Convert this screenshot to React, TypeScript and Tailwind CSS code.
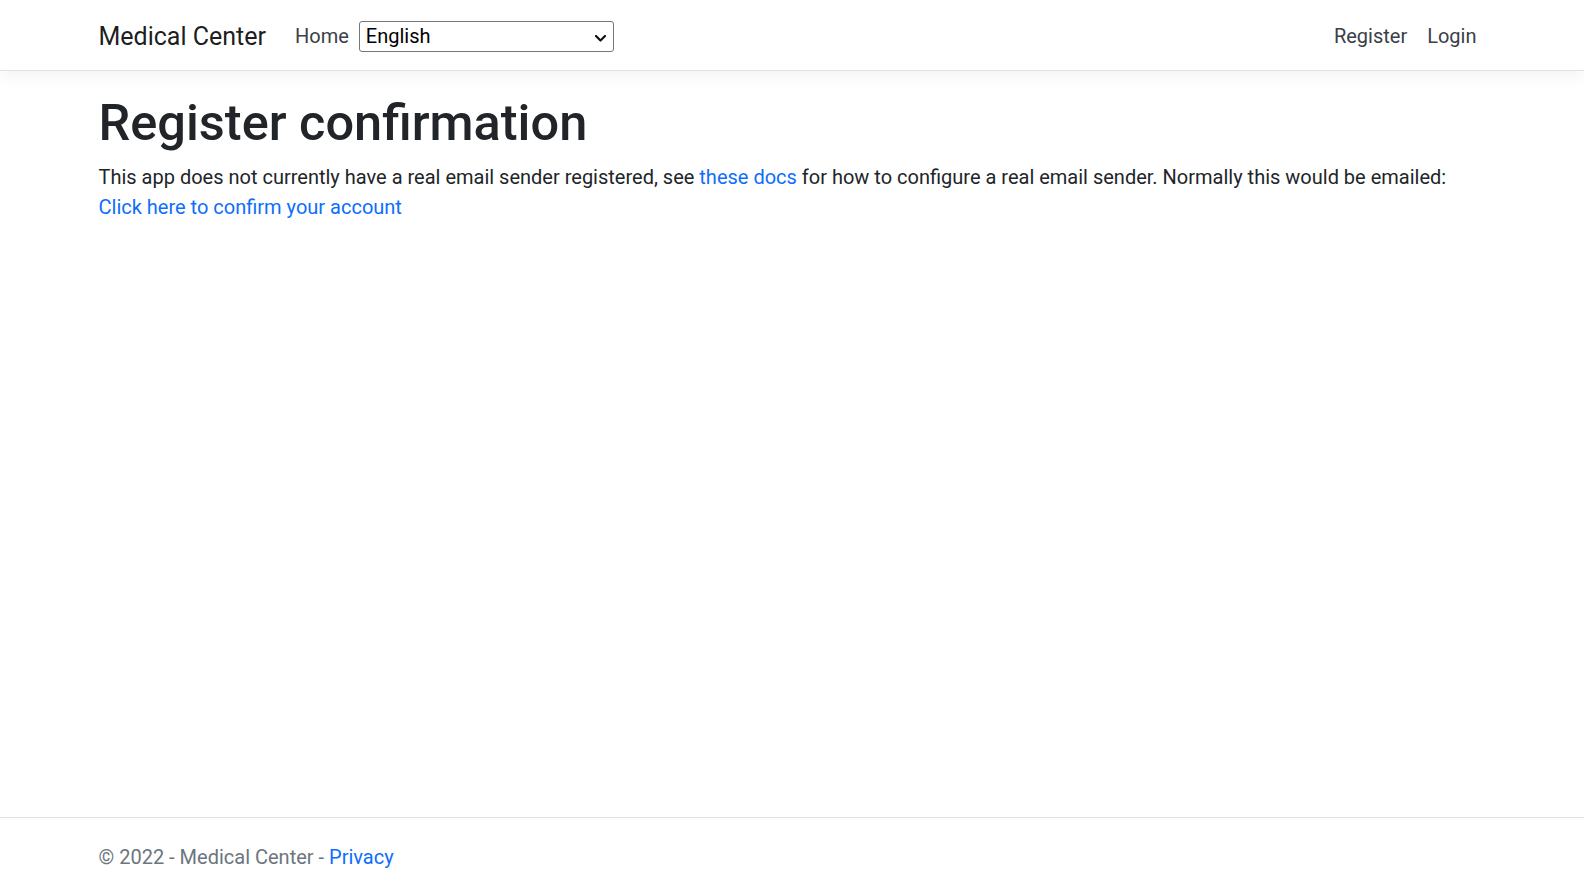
import React from "react";

export default function App() {
  return (
    <div className="min-h-screen flex flex-col bg-white text-[#212529] font-['Roboto',sans-serif] text-[20px] leading-[30px]">
      <header className="relative z-10 h-[71px] border-b border-[#dee2e6] bg-white shadow-[0_5px_15px_rgba(0,0,0,0.05)]">
        <nav className="mx-auto w-[1425px] h-[70px] pt-[2px] px-[15px] flex items-center">
          <a href="#" className="ml-[4px] mr-[19px] text-[25px] leading-[37px] text-[rgba(0,0,0,0.9)] whitespace-nowrap">
            Medical Center
          </a>
          <ul className="flex items-center">
            <li>
              <a href="#" className="block px-[10px] py-[10px] text-[#3a4047]">Home</a>
            </li>
            <li className="relative">
              <select
                defaultValue="en"
                className="appearance-none block w-[255px] h-[31px] pl-[6px] pr-[24px] border border-[#767676] rounded-[3px] bg-white text-[20px] leading-[29px] text-black font-['Roboto',sans-serif] outline-none"
              >
                <option value="en">English</option>
                <option value="es">Español</option>
              </select>
              <svg
                className="pointer-events-none absolute right-[8px] top-[14px]"
                width="11"
                height="7"
                viewBox="0 0 11 7"
                fill="none"
              >
                <path d="M1 1L5.5 5.5L10 1" stroke="#111" strokeWidth="2.2" strokeLinecap="round" strokeLinejoin="round" />
              </svg>
            </li>
          </ul>
          <ul className="ml-auto mr-[3px] flex items-center">
            <li>
              <a href="#" className="block px-[10px] py-[10px] text-[#3a4047]">Register</a>
            </li>
            <li>
              <a href="#" className="block px-[10px] py-[10px] text-[#3a4047]">Login</a>
            </li>
          </ul>
        </nav>
      </header>

      <main className="flex-1 mx-auto w-[1425px] px-[15px] pt-[22px]">
        <h1 className="ml-[4px] mb-[9px] text-[50.5px] leading-[60px] font-medium">Register confirmation</h1>
        <p className="ml-[4px]">
          This app does not currently have a real email sender registered, see{" "}
          <a href="#" className="text-[#0d6efd]">these docs</a> for how to configure a real email sender. Normally this would be emailed:{" "}
          <a href="#" className="text-[#0d6efd]">Click here to confirm your account</a>
        </p>
      </main>

      <footer className="h-[76px] border-t border-[#dee2e6] text-[#6c757d] whitespace-nowrap">
        <div className="mx-auto w-[1425px] px-[15px] pt-[2px] leading-[75px]">
          <span className="ml-[4px]">© 2022 - Medical Center - </span>
          <a href="#" className="text-[#0d6efd]">Privacy</a>
        </div>
      </footer>
    </div>
  );
}
